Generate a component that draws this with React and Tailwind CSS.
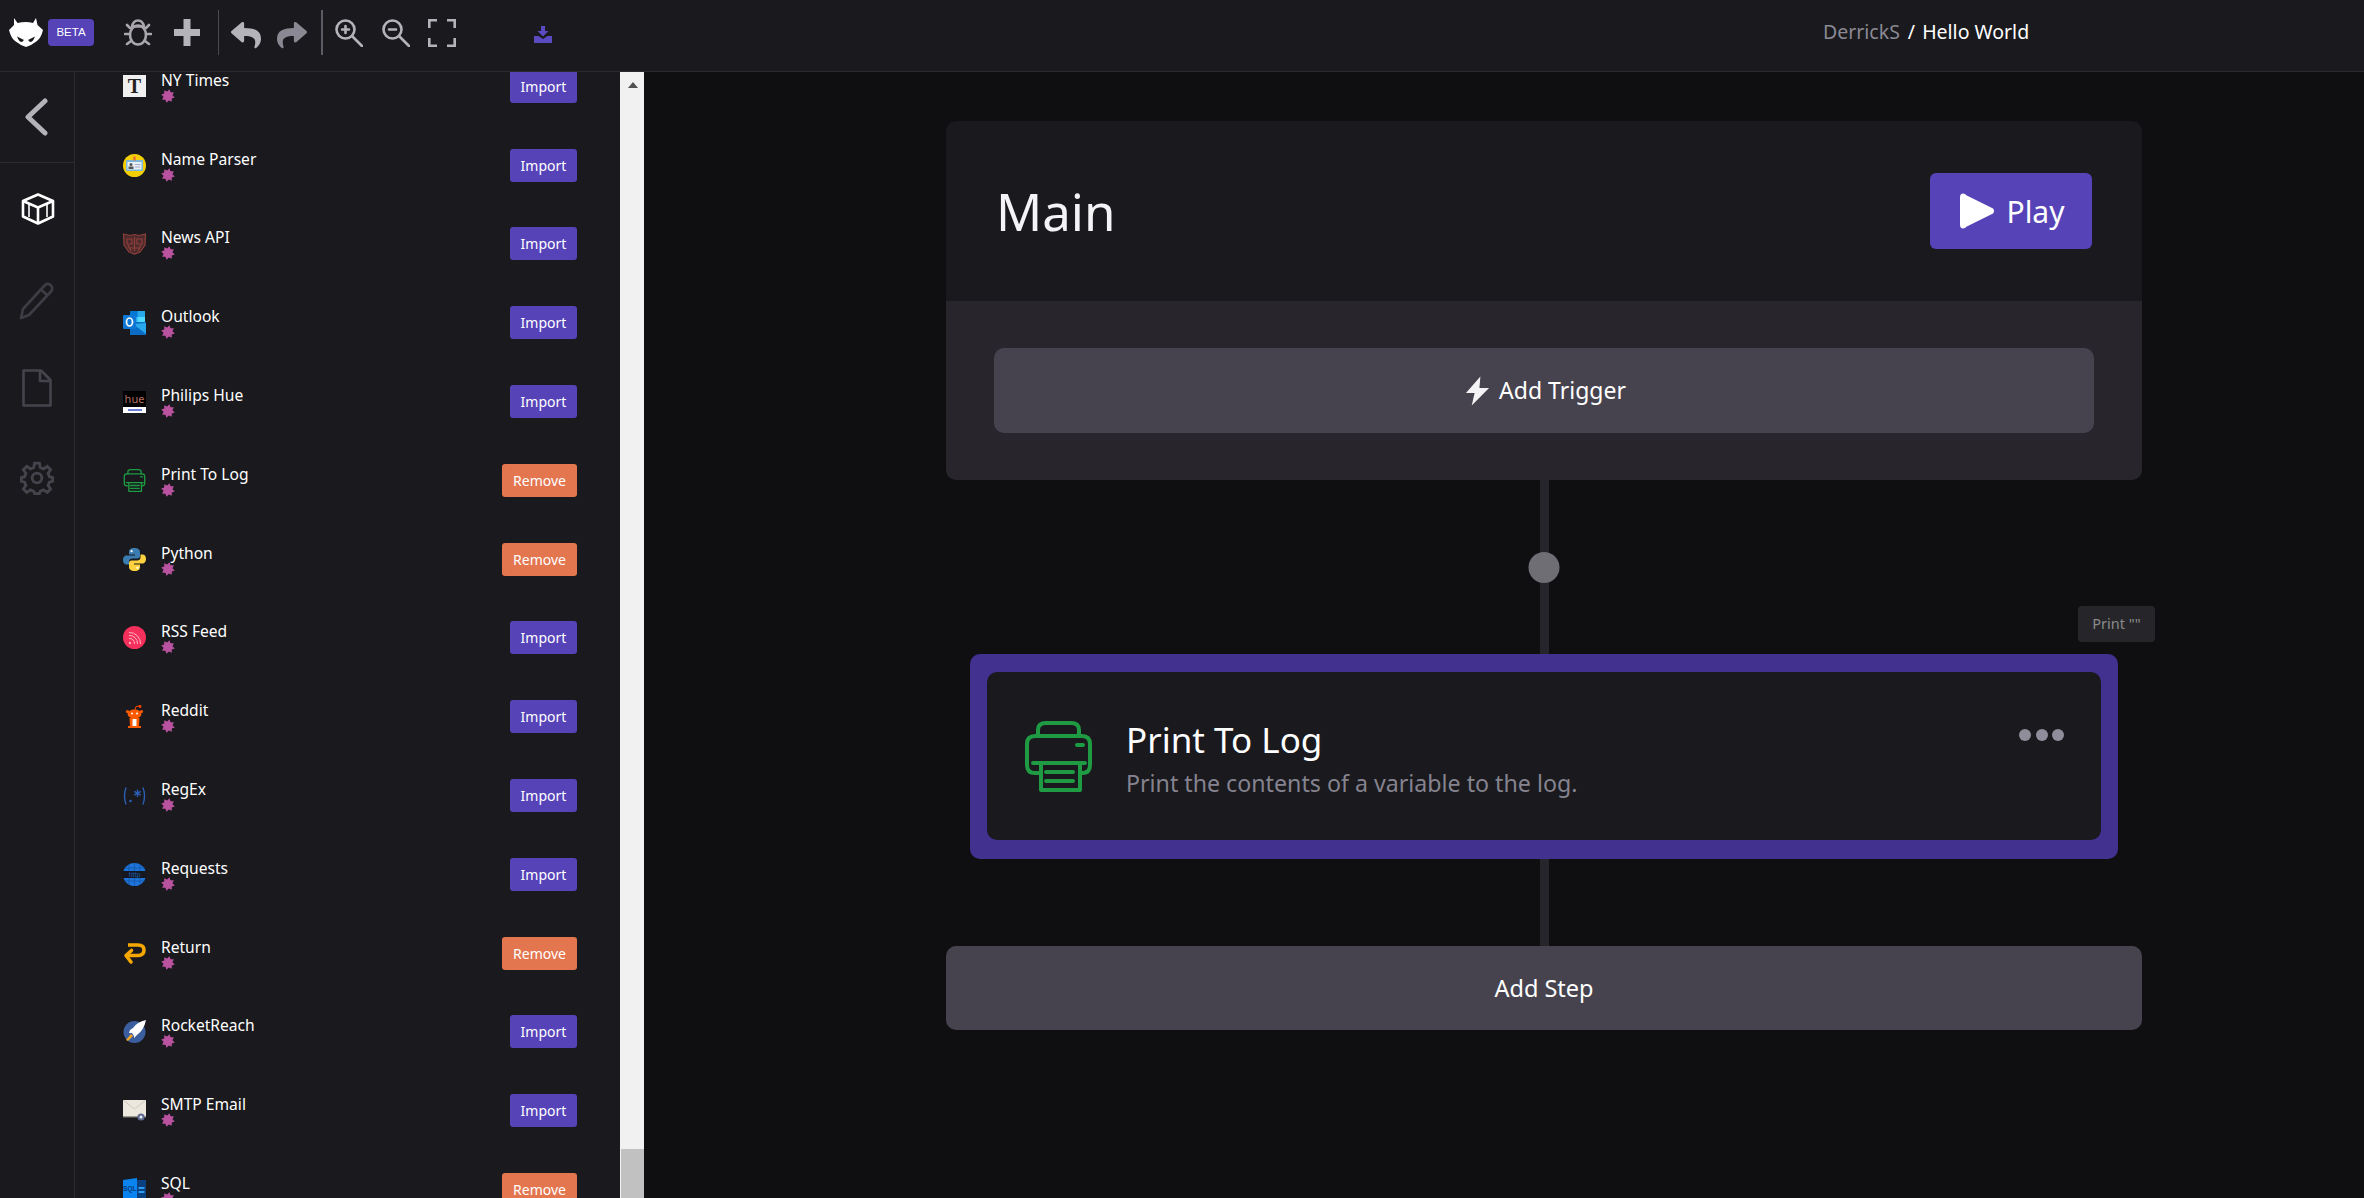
import { FaReply, FaShare } from 'react-icons/fa';

function Star() {
  return (
    <svg width="14" height="14" viewBox="0 0 14 14" className="block -mt-[1px]">
      <polygon
        fill="#b9529f"
        points="14,7 11.2,8.75 11.95,11.95 8.75,11.2 7,14 5.25,11.2 2.05,11.95 2.8,8.75 0,7 2.8,5.25 2.05,2.05 5.25,2.8 7,0 8.75,2.8 11.95,2.05 11.2,5.25"
        transform="rotate(12 7 7)"
      />
    </svg>
  );
}

function NytIcon() {
  return (
    <div className="w-[23px] h-[22px] bg-[#f0f0f0] flex items-center justify-center font-['Liberation_Serif',serif] font-bold text-[20px] leading-none text-[#222]">
      T
    </div>
  );
}

function NameIcon() {
  return (
    <svg width="23" height="23" viewBox="0 0 23 23">
      <circle cx="11.5" cy="11.5" r="11.5" fill="#f5cf05" />
      <rect x="3" y="6" width="17" height="11" rx="1" fill="#7db8dc" />
      <rect x="4.5" y="8" width="14" height="7.5" fill="#e8f1f6" />
      <circle cx="8" cy="10.5" r="1.5" fill="#555" />
      <rect x="5.5" y="12.5" width="5" height="2.5" fill="#555" />
      <rect x="12" y="10" width="5.5" height="1" fill="#aac" />
      <rect x="12" y="12.5" width="5.5" height="1" fill="#aac" />
      <rect x="10.2" y="2.5" width="2.6" height="4" fill="#e8743b" />
    </svg>
  );
}

function NewsIcon() {
  return (
    <svg width="23" height="23" viewBox="0 0 23 23" fill="none" stroke="#8e3f3a" strokeWidth="1.2">
      <path d="M0.5 2 L7 3.5 L11.5 2.5 L16 3.5 L22.5 2 L22 13 L17 20 L11.5 22 L6 20 L1 13 Z" fill="#4d2a2c" />
      <path d="M4 7 h5 v5 h-5z M14 7 h5 v5 h-5z M11.5 5 v14 M7 16 h9 M5 13 l3 6 M18 13 l-3 6" />
    </svg>
  );
}

function OutlookIcon() {
  return (
    <svg width="23" height="25" viewBox="0 0 23 25">
      <rect x="7" y="1" width="15" height="12" fill="#28a8ea" />
      <rect x="7" y="1" width="7.5" height="6" fill="#0078d4" />
      <rect x="14.5" y="7" width="7.5" height="6" fill="#50d9ff" />
      <path d="M7 12 L23 12 V25 H7 Z" fill="#0a6cc4" />
      <path d="M10 14 L23 24 V13 Z" fill="#28a8ea" />
      <rect x="0" y="5" width="13" height="14" rx="1" fill="#0f78d4" />
      <ellipse cx="6.5" cy="12" rx="3" ry="4" fill="none" stroke="#fff" strokeWidth="1.7" />
    </svg>
  );
}

function HueIcon() {
  return (
    <div className="w-[23px] h-[22px] bg-white flex flex-col">
      <div className="h-[16px] bg-black flex items-center justify-center text-[11px] leading-none text-[#b07060]">
        hue
      </div>
      <div className="flex-1 flex items-center justify-center">
        <div className="w-[14px] h-[2px] bg-[#6a80d8]" />
      </div>
    </div>
  );
}

// same drawing is used small in the list and large on the step card
function PrinterIcon({ width, height, stroke }) {
  return (
    <svg width={width} height={height} viewBox="0 0 67 71" fill="none" stroke={stroke} strokeWidth="4" strokeLinecap="round" strokeLinejoin="round">
      <path d="M13 15 V9 Q13 2 21 2 H46 Q54 2 54 9 V15" />
      <path d="M15 52 H10 Q2 52 2 44 V23 Q2 15 10 15 H57 Q65 15 65 23 V44 Q65 52 57 52 H55" />
      <path d="M8 42 H60" />
      <path d="M16 42 V69 H55 V42" />
      <path d="M21 51 H48 M21 60 H48" />
      <path d="M52 24 H58" />
    </svg>
  );
}

function PythonIcon() {
  return (
    <svg width="23" height="23" viewBox="0 0 23 23">
      <path d="M11.5 0 C7 0 6 2 6 4 V6.5 H12 V7.5 H3.5 C1 7.5 0 10 0 12 C0 14.5 1.2 16.5 3.5 16.5 H6 V13.5 C6 11.5 7.5 10.5 9.5 10.5 H14.5 C16 10.5 17 9.5 17 8 V4 C17 1.5 14.5 0 11.5 0 Z" fill="#3b7db0" />
      <path d="M11.5 23 C16 23 17 21 17 19 V16.5 H11 V15.5 H19.5 C22 15.5 23 13 23 11 C23 8.5 21.8 6.5 19.5 6.5 H17.5 V9.5 C17.5 11.5 16 12.5 14 12.5 H8.5 C7 12.5 6 13.5 6 15 V19 C6 21.5 8.5 23 11.5 23 Z" fill="#fdd23e" />
      <circle cx="8.6" cy="3.2" r="1.1" fill="#fff" />
      <circle cx="14.4" cy="19.8" r="1.1" fill="#fff" />
    </svg>
  );
}

function RssIcon() {
  return (
    <svg width="23" height="23" viewBox="0 0 23 23" fill="none">
      <circle cx="11.5" cy="11.5" r="11.5" fill="#f5305c" />
      <circle cx="7" cy="17" r="1.2" fill="#ffb3c2" />
      <path d="M6 12.5 A5 5 0 0 1 11.5 18 M6 9.5 A8 8 0 0 1 14.5 18 M6 6.5 A11 11 0 0 1 17.5 18" stroke="#ffb3c2" strokeWidth="1" />
    </svg>
  );
}

function RedditIcon() {
  return (
    <svg width="23" height="23" viewBox="0 0 23 23">
      <path d="M11.5 6 L13 1.5 L16.5 1" stroke="#ff4500" strokeWidth="1" fill="none" />
      <circle cx="17" cy="1.5" r="1.4" fill="#ff4500" />
      <ellipse cx="11.5" cy="9" rx="7" ry="4.5" fill="#ff5a00" />
      <circle cx="4.5" cy="6.5" r="1.6" fill="#ff5a00" />
      <circle cx="18.5" cy="6.5" r="1.6" fill="#ff5a00" />
      <circle cx="9" cy="8.5" r="1" fill="#fff" />
      <circle cx="14" cy="8.5" r="1" fill="#fff" />
      <path d="M6.5 13 H16.5 L16 21 H18 V23 H5 V21 H7 Z" fill="#ff5a00" />
      <rect x="9.5" y="14" width="4" height="7" fill="#fff" />
    </svg>
  );
}

function RegexIcon() {
  return (
    <svg width="23" height="18" viewBox="0 0 23 18" fill="none" stroke="#2b5fb4" strokeWidth="1.4">
      <path d="M3 0.5 Q0 9 3 17.5 M20 0.5 Q23 9 20 17.5" />
      <circle cx="7.5" cy="14" r="1.3" fill="#2b5fb4" stroke="none" />
      <path d="M14.5 2.5 V10 M11.2 4.4 L17.8 8.1 M17.8 4.4 L11.2 8.1" />
    </svg>
  );
}

function RequestsIcon() {
  return (
    <svg width="23" height="23" viewBox="0 0 23 23">
      <circle cx="11.5" cy="11.5" r="11.5" fill="#1e74d8" />
      <path d="M0 8 H23 V15 H0 Z" fill="#14171f" />
      <path d="M1 5 H22 M1 18 H22 M11.5 0 V8 M11.5 15 V23 M6 1.5 V8 M17 1.5 V8 M6 15 V21.5 M17 15 V21.5" stroke="#0f4e9c" strokeWidth="0.6" />
      <text x="11.5" y="14" textAnchor="middle" fontSize="7" fill="#1c5fb0" fontFamily="Liberation Sans, sans-serif">http</text>
    </svg>
  );
}

function ReturnIcon() {
  return (
    <svg width="23" height="23" viewBox="0 0 23 23" fill="none" stroke="#f7a800" strokeWidth="3.6">
      <path d="M5 3 H15 Q21 3 21 8 Q21 13.5 15 13.5 H5" />
      <path d="M8.5 8.5 L3 13.5 L8 20" strokeLinecap="round" strokeLinejoin="round" />
    </svg>
  );
}

function RocketIcon() {
  return (
    <svg width="23" height="23" viewBox="0 0 23 23">
      <circle cx="11.5" cy="12" r="11" fill="#3b5f9e" />
      <path d="M23 0 Q14 2 10 8 L7 10 L6 13 L9 13 L11 16 L11 18 L14 15 Q21 10 23 0 Z" fill="#fff" />
      <path d="M8 14 L3 20 L5 21 L10 16 Z" fill="#f5a623" />
    </svg>
  );
}

function SmtpIcon() {
  return (
    <svg width="23" height="21" viewBox="0 0 23 21">
      <rect x="0" y="0" width="23" height="17" fill="#ece8dd" />
      <path d="M0 0 L11.5 9 L23 0" fill="none" stroke="#cfcabb" strokeWidth="1" />
      <rect x="0" y="16" width="23" height="1.4" fill="#9a9890" />
      <circle cx="18" cy="17" r="3.6" fill="#5e6a8e" />
      <circle cx="18" cy="17" r="1.5" fill="#e8ecf6" />
    </svg>
  );
}

function SqlIcon() {
  return (
    <svg width="23" height="24" viewBox="0 0 23 24">
      <path d="M0 2 L14 0 V24 H0 Z" fill="#0a84f0" />
      <rect x="14" y="2" width="9" height="22" fill="#0a3f80" />
      <rect x="15.5" y="9" width="6" height="2" fill="#2d9cf5" />
      <rect x="15.5" y="13" width="6" height="2" fill="#2d9cf5" />
      <text x="6.8" y="13" textAnchor="middle" fontSize="6.5" fontWeight="700" fill="#063a78" fontFamily="Liberation Sans, sans-serif">SQL</text>
    </svg>
  );
}

const packages = [
  { name: 'NY Times', icon: <NytIcon />, added: false },
  { name: 'Name Parser', icon: <NameIcon />, added: false },
  { name: 'News API', icon: <NewsIcon />, added: false },
  { name: 'Outlook', icon: <OutlookIcon />, added: false },
  { name: 'Philips Hue', icon: <HueIcon />, added: false },
  { name: 'Print To Log', icon: <PrinterIcon width={23} height={23} stroke="#1f9c43" />, added: true },
  { name: 'Python', icon: <PythonIcon />, added: true },
  { name: 'RSS Feed', icon: <RssIcon />, added: false },
  { name: 'Reddit', icon: <RedditIcon />, added: false },
  { name: 'RegEx', icon: <RegexIcon />, added: false },
  { name: 'Requests', icon: <RequestsIcon />, added: false },
  { name: 'Return', icon: <ReturnIcon />, added: true },
  { name: 'RocketReach', icon: <RocketIcon />, added: false },
  { name: 'SMTP Email', icon: <SmtpIcon />, added: false },
  { name: 'SQL', icon: <SqlIcon />, added: true },
];

function PackageRow({ pkg }) {
  return (
    <div className="h-[78.8px] shrink-0 flex items-center pl-[48px] pr-[43px]">
      <div className="w-[23px] h-[25px] flex items-center justify-center">{pkg.icon}</div>
      <div className="ml-[15px] flex flex-col">
        <span className="text-[15.6px] leading-[20px] text-white">{pkg.name}</span>
        <Star />
      </div>
      {pkg.added ? (
        <button className="ml-auto w-[75px] h-[33px] rounded-[3px] bg-[#e3754f] text-white text-[14px]">Remove</button>
      ) : (
        <button className="ml-auto w-[67px] h-[33px] rounded-[3px] bg-[#5643b8] text-white text-[14px]">Import</button>
      )}
    </div>
  );
}

function TopBar() {
  return (
    <header className="h-[72px] shrink-0 flex items-start bg-[#19191e] border-b border-[#2a2a30]">
      <svg width="34" height="29" viewBox="0 0 34 29" className="ml-[9px] mt-[18px] shrink-0">
        <path fill="#fff" fillRule="evenodd" d="M5 0 L8.5 5 Q17 3 24 5 L27 0 L28.5 7 L34 12 Q32 20 28 23 Q23 27 17 29 Q11 27 6 23 Q2 20 0 12 L5 7 Z M8 18.5 Q10 24 13 24 L15 22 Z M26 18.5 Q24 24 21 24 L19 22 Z" />
      </svg>
      <div className="ml-[5px] mt-[19px] w-[46px] h-[27px] rounded-[4px] bg-[#5643b8] flex items-center justify-center text-white text-[11.5px] font-['Liberation_Sans',sans-serif]">
        BETA
      </div>
      <svg width="28" height="27" viewBox="0 0 28 27" fill="none" stroke="#a9a7ad" strokeWidth="2.6" strokeLinecap="round" className="ml-[30px] mt-[19px]">
        <ellipse cx="14" cy="16" rx="8" ry="9.5" />
        <path d="M8 8 Q9 1.5 14 1.5 Q19 1.5 20 8 M8.5 7.5 H19.5" />
        <path d="M6 9 L3 6 M22 9 L25 6 M6 15 H1 M22 15 H27 M7 22 L3 25 M21 22 L25 25" />
      </svg>
      <svg width="26" height="27" viewBox="0 0 26 27" className="ml-[22px] mt-[19px]">
        <path fill="#b5b3ba" d="M9.5 0 H16.5 V10 H26 V17 H16.5 V27 H9.5 V17 H0 V10 H9.5 Z" />
      </svg>
      <div className="ml-[18px] mt-[10px] w-px h-[45px] bg-[#4a4950]" />
      <FaReply size={30} color="#b5b3ba" className="ml-[12px] mt-[20px]" />
      <FaShare size={30} color="#8a8893" className="ml-[16px] mt-[20px]" />
      <div className="ml-[14px] mt-[10px] w-[2px] h-[45px] bg-[#5c5b63]" />
      <svg width="28" height="28" viewBox="0 0 28 28" fill="none" stroke="#b5b3ba" strokeWidth="2.6" strokeLinecap="round" className="ml-[12px] mt-[19px]">
        <circle cx="10.5" cy="10.5" r="9" />
        <path d="M17.5 17.5 L27 27 M7 10.5 H14 M10.5 7 V14" />
      </svg>
      <svg width="28" height="28" viewBox="0 0 28 28" fill="none" stroke="#b5b3ba" strokeWidth="2.6" strokeLinecap="round" className="ml-[19px] mt-[19px]">
        <circle cx="10.5" cy="10.5" r="9" />
        <path d="M17.5 17.5 L27 27 M7 10.5 H14" />
      </svg>
      <svg width="28" height="28" viewBox="0 0 28 28" fill="none" stroke="#b5b3ba" strokeWidth="2.6" className="ml-[18px] mt-[19px]">
        <path d="M1.3 9 V1.3 H9 M19 1.3 H26.7 V9 M1.3 19 V26.7 H9 M19 26.7 H26.7 V19" />
      </svg>
      <svg width="18" height="17" viewBox="0 0 18 17" className="ml-[78px] mt-[26px]">
        <path fill="#5a4bc0" d="M7 0 H11 V5 H14.5 L9 10.5 L3.5 5 H7 Z" />
        <path fill="#5a4bc0" d="M0 10 H4.5 L9 13 L13.5 10 H18 V17 H0 Z" />
      </svg>
      <div className="ml-[1271px] mt-[17px] flex items-center text-[19.5px] leading-[30px]">
        <span className="text-[#8b8994]">DerrickS</span>
        <span className="ml-[8px] text-white">/</span>
        <span className="ml-[7px] text-white">Hello World</span>
      </div>
    </header>
  );
}

function Rail() {
  return (
    <aside className="w-[75px] shrink-0 flex flex-col border-r border-[#2a2a30] bg-[#19191e]">
      <div className="h-[91px] shrink-0 border-b border-[#2a2a30] flex pl-[24px] pt-[26px]">
        <svg width="24" height="38" viewBox="0 0 24 38" fill="none" stroke="#b5b3ba" strokeWidth="5" strokeLinecap="round" strokeLinejoin="round">
          <path d="M21 3 L4 19 L21 35" />
        </svg>
      </div>
      <svg width="34" height="32" viewBox="0 0 34 32" fill="none" stroke="#fff" strokeWidth="2.6" strokeLinejoin="round" className="ml-[21px] mt-[30px]">
        <path d="M17 1.5 L32 8 V23.5 L17 30.5 L2 23.5 V8 Z" />
        <path d="M2 8 L17 14.5 L32 8 M17 14.5 V30.5" />
        <path d="M8 11 V24 M26 11 V24" strokeWidth="1.6" />
      </svg>
      <svg width="35" height="38" viewBox="0 0 35 38" fill="none" stroke="#3e3d45" strokeWidth="2.6" strokeLinejoin="round" className="ml-[19px] mt-[57px]">
        <path d="M2 36 L4 27 L26 3 Q29 0.5 32 3.5 Q34.5 6.5 32 9.5 L10 33 Z" />
        <path d="M22 7.5 L28.5 13.5" />
      </svg>
      <svg width="30" height="38" viewBox="0 0 30 38" fill="none" stroke="#45444d" strokeWidth="2.6" strokeLinejoin="round" className="ml-[22px] mt-[49px]">
        <path d="M3 1.5 H19 L28.5 11 V36.5 H1.5 V1.5 Z" />
        <path d="M18 1.5 V12 H28.5" />
      </svg>
      <svg width="34" height="34" viewBox="0 0 24 24" fill="none" stroke="#45444d" strokeWidth="2" className="ml-[20px] mt-[54px]">
        <circle cx="12" cy="12" r="3.4" />
        <path d="M10.3 1.5 H13.7 L14.3 4.6 L16.6 5.6 L19.2 3.8 L21.6 6.2 L19.8 8.8 L20.8 11.1 L23 11.7 V14.3 L20.8 14.9 L19.8 17.2 L21.6 19.8 L19.2 22.2 L16.6 20.4 L14.3 21.4 L13.7 23 H10.3 L9.7 21.4 L7.4 20.4 L4.8 22.2 L2.4 19.8 L4.2 17.2 L3.2 14.9 L1 14.3 V11.7 L3.2 11.1 L4.2 8.8 L2.4 6.2 L4.8 3.8 L7.4 5.6 L9.7 4.6 Z" />
      </svg>
    </aside>
  );
}

function Scrollbar() {
  return (
    <div className="w-[24px] shrink-0 bg-[#f1f1f1] flex flex-col justify-between pl-[1px]">
      <div className="h-[24px] flex items-start justify-center pt-[10px]">
        <div className="w-0 h-0 border-x-[5px] border-x-transparent border-b-[6px] border-b-[#505050]" />
      </div>
      <div className="h-[49px] bg-[#c1c1c1]" />
    </div>
  );
}

function Connector({ className }) {
  return <div className={`w-[9px] mx-auto bg-[#26252b] ${className}`} />;
}

function Canvas() {
  return (
    <main className="flex-1 min-w-0 bg-[#0f0f12] pl-[302px] pt-[49px]">
      <div className="w-[1196px]">
        <section className="rounded-[10px] overflow-hidden">
          <div className="h-[180px] bg-[#19191e] flex items-center justify-between pl-[50px] pr-[50px]">
            <h1 className="text-[51px] leading-none text-[#f4f4f6]">Main</h1>
            <button className="w-[162px] h-[76px] rounded-[6px] bg-[#5643b8] flex items-center justify-center gap-[11px] pl-[3px] text-white text-[30px]">
              <svg width="35" height="36" viewBox="0 0 36 36">
                <path fill="#fff" d="M3 0 Q0 0 0 4 V32 Q0 36 3 36 Q5 36 7 34 L34 20.5 Q36 18 34 15.5 L7 2 Q5 0 3 0 Z" />
              </svg>
              Play
            </button>
          </div>
          <div className="h-[179px] bg-[#28262c] px-[48px] py-[47px]">
            <button className="w-full h-[85px] rounded-[10px] bg-[#46434f] flex items-center justify-center gap-[9px] pl-[3px] text-white text-[23px]">
              <svg width="25" height="30" viewBox="0 0 26 30">
                <path fill="#f4f4f6" d="M16 0 L1 17 H10 L7 30 L25 12 H15 Z" />
              </svg>
              Add Trigger
            </button>
          </div>
        </section>

        <div className="relative">
          <Connector className="h-[174px]" />
          <div className="absolute left-1/2 top-[72px] -translate-x-1/2 w-[31px] h-[31px] rounded-full bg-[#6f6e75]" />
          <div className="absolute left-[1132px] top-[126px] w-[77px] h-[36px] rounded-[4px] bg-[#26262a] flex items-center justify-center text-[14.5px] text-[#8a8a8a]">
            Print ""
          </div>
        </div>

        <section className="w-[1148px] mx-auto h-[205px] rounded-[10px] bg-[#43318f] px-[17px] pt-[18px] pb-[19px]">
          <div className="h-full rounded-[10px] bg-[#19191e] flex items-center pl-[38px] pr-[37px]">
            <PrinterIcon width={67} height={71} stroke="#1f9c43" />
            <div className="ml-[34px] pt-[5px] flex flex-col">
              <span className="text-[35px] leading-[44px] text-white">Print To Log</span>
              <span className="mt-[4px] text-[23.2px] leading-[34px] text-[#85838f]">Print the contents of a variable to the log.</span>
            </div>
            <div className="ml-auto self-start mt-[57px] flex gap-[4.5px]">
              <div className="w-[12px] h-[12px] rounded-full bg-[#8f8d99]" />
              <div className="w-[12px] h-[12px] rounded-full bg-[#8f8d99]" />
              <div className="w-[12px] h-[12px] rounded-full bg-[#8f8d99]" />
            </div>
          </div>
        </section>

        <Connector className="h-[87px]" />

        <button className="w-full h-[84px] rounded-[10px] bg-[#46434f] pt-[2px] text-white text-[23.5px]">Add Step</button>
      </div>
    </main>
  );
}

export default function App() {
  return (
    <div className="h-screen flex flex-col overflow-hidden bg-[#0f0f12] font-['Noto_Sans',sans-serif]">
      <TopBar />
      <div className="flex-1 min-h-0 flex">
        <Rail />
        <div className="w-[545px] shrink-0 overflow-hidden bg-[#19191e]">
          <div className="-mt-[25px] flex flex-col">
            {packages.map((pkg) => (
              <PackageRow key={pkg.name} pkg={pkg} />
            ))}
          </div>
        </div>
        <Scrollbar />
        <Canvas />
      </div>
    </div>
  );
}
